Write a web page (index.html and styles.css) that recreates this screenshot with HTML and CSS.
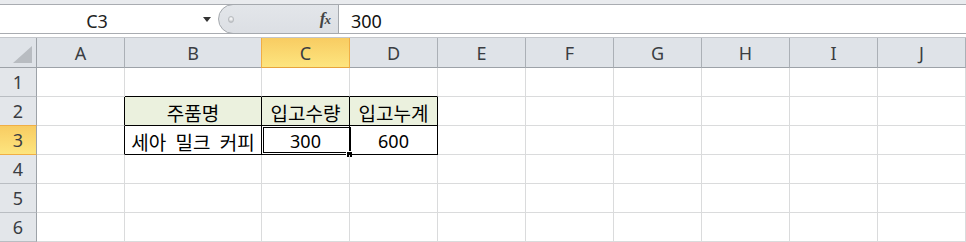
FILE: index.html
```html
<!DOCTYPE html>
<html lang="ko">
<head>
<meta charset="utf-8">
<title>Excel</title>
<link rel="stylesheet" href="styles.css">
</head>
<body>
<div class="app">
  <div class="topstrip"></div>
  <div class="fbar">
    <div class="namebox"><span class="nb-label">C3</span><span class="nb-arrow"></span></div>
    <div class="fxbox"><span class="grip"></span><span class="fx"><i>f</i><i class="fx-x">x</i></span></div>
    <div class="finput">300</div>
  </div>
  <div class="gap"></div>
  <div class="sheet">
    <div class="hd corner"><svg width="36" height="29" viewBox="0 0 36 29"><polygon points="32,8 32,25 13,25" fill="#b8bcc1"/></svg></div>
    <div class="hd col">A</div>
    <div class="hd col">B</div>
    <div class="hd col sel">C</div>
    <div class="hd col">D</div>
    <div class="hd col">E</div>
    <div class="hd col">F</div>
    <div class="hd col">G</div>
    <div class="hd col">H</div>
    <div class="hd col">I</div>
    <div class="hd col last">J</div>

    <div class="rh">1</div>
    <div class="c"></div><div class="c bb"></div><div class="c bb"></div><div class="c bb"></div><div class="c"></div><div class="c"></div><div class="c"></div><div class="c"></div><div class="c"></div><div class="c"></div>

    <div class="rh">2</div>
    <div class="c br"></div><div class="c t th">주품명</div><div class="c t th">입고수량</div><div class="c t th">입고누계</div><div class="c"></div><div class="c"></div><div class="c"></div><div class="c"></div><div class="c"></div><div class="c"></div>

    <div class="rh sel">3</div>
    <div class="c br"></div><div class="c t kr">세아 밀크 커피</div><div class="c t num active">300<span class="selbox"></span><span class="handle"></span></div><div class="c t num">600</div><div class="c"></div><div class="c"></div><div class="c"></div><div class="c"></div><div class="c"></div><div class="c"></div>

    <div class="rh">4</div>
    <div class="c"></div><div class="c"></div><div class="c"></div><div class="c"></div><div class="c"></div><div class="c"></div><div class="c"></div><div class="c"></div><div class="c"></div><div class="c"></div>

    <div class="rh">5</div>
    <div class="c"></div><div class="c"></div><div class="c"></div><div class="c"></div><div class="c"></div><div class="c"></div><div class="c"></div><div class="c"></div><div class="c"></div><div class="c"></div>

    <div class="rh">6</div>
    <div class="c"></div><div class="c"></div><div class="c"></div><div class="c"></div><div class="c"></div><div class="c"></div><div class="c"></div><div class="c"></div><div class="c"></div><div class="c"></div>
  </div>
</div>
</body>
</html>
```
FILE: styles.css
```css
* { box-sizing: border-box; }
html, body { margin: 0; padding: 0; background: #fff; }
body {
  width: 966px;
  height: 242px;
  overflow: hidden;
  font-family: "Noto Sans", "Noto Sans CJK KR", sans-serif;
  color: #000;
}
.app { width: 966px; }

.topstrip {
  height: 5px;
  background: #e9ebee;
  border-bottom: 1px solid #a9acb1;
}

.fbar {
  display: flex;
  height: 29px;
  border-bottom: 1px solid #a9acb1;
  background: #fff;
}
.namebox {
  width: 218px;
  display: flex;
  align-items: center;
  font-size: 18px;
  color: #222;
  padding-top: 3px;
}
.nb-label { width: 194px; text-align: center; }
.nb-arrow {
  margin-left: 9px;
  margin-top: -3px;
  width: 0; height: 0;
  border-left: 4px solid transparent;
  border-right: 4px solid transparent;
  border-top: 5px solid #333;
}
.fxbox {
  width: 121px;
  margin: -1px 0 -1px 0;
  height: 30px;
  background: linear-gradient(#e3e6ea, #dcdfe4);
  border: 1px solid #a5a9ae;
  border-radius: 15px 0 0 15px;
  display: flex;
  align-items: center;
  justify-content: space-between;
  padding: 0 8px 0 9px;
}
.grip {
  width: 6px; height: 7px;
  border-radius: 3px;
  background: radial-gradient(circle at 50% 35%, #ffffff 0, #d3d5d8 60%, #a9adb2 100%);
  border: 1px solid #b9bcc0;
}
.fx {
  font-family: "Liberation Serif", serif;
  font-size: 17px;
  color: #444;
  font-weight: bold;
  letter-spacing: -1px;
}
.fx-x { font-size: 13px; }
.finput {
  flex: 1;
  font-size: 18px;
  color: #111;
  padding-left: 12px;
  display: flex;
  align-items: center;
  padding-top: 3px;
}

.gap { height: 3px; background: #fff; }

.sheet {
  display: grid;
  grid-template-columns: 37px 88px 137px 88px 88px 88px 88px 88px 88px 88px 88px;
  grid-template-rows: 30px 29px 29px 29px 29px 29px 29px;
  border-top: 1px solid #c3c6cb;
}
.hd {
  background: #dfe3e8;
  border-right: 1px solid #abb0b6;
  border-bottom: 1px solid #9da2a8;
  display: flex;
  align-items: center;
  justify-content: center;
  font-size: 18px;
  color: #3a3d42;
}
.hd.last { border-right: 1px solid #abb0b6; }
.corner { border-right: 1px solid #9da2a8; }
.corner svg { display: block; }
.hd.sel {
  background: linear-gradient(#f8cc62, #fde57f);
  border-left: 1px solid #f0ae45;
  border-right: 1px solid #f0ae45;
  border-bottom: 1px solid #e7a33d;
  margin-left: -1px;
}
.rh {
  background: #e3e6ea;
  border-right: 1px solid #9da2a8;
  border-bottom: 1px solid #b9bdc2;
  display: flex;
  align-items: center;
  justify-content: center;
  font-size: 18px;
  color: #3a3d42;
}
.rh.sel {
  background: linear-gradient(#f8cc62, #fde57f);
  border-bottom: 1px solid #f0ae45;
  border-top: 1px solid #f0ae45;
  margin-top: -1px;
}
.c {
  border-right: 1px solid #dadbdc;
  border-bottom: 1px solid #dadbdc;
  position: relative;
}
.c.bb { border-bottom-color: #000; }
.c.br { border-right-color: #000; }
.c.t {
  border-right: 1px solid #000;
  border-bottom: 1px solid #000;
  display: flex;
  align-items: center;
  justify-content: center;
  padding-top: 2px;
}
.c.th {
  background: #ebf1de;
  font-family: "Noto Sans CJK KR", sans-serif;
  font-size: 19px;
}
.c.kr {
  font-family: "Noto Sans CJK KR", sans-serif;
  font-size: 19px;
  word-spacing: 4px;
}
.c.num { font-size: 18px; }
.selbox {
  position: absolute;
  left: 1px;
  top: 1px;
  right: -2px;
  bottom: 1px;
  border: 1px solid #000;
  border-right-width: 1px;
}
.handle {
  position: absolute;
  right: -4px;
  bottom: -4px;
  width: 7px;
  height: 7px;
  background: #000;
  border: 1px solid #fff;
}
```
